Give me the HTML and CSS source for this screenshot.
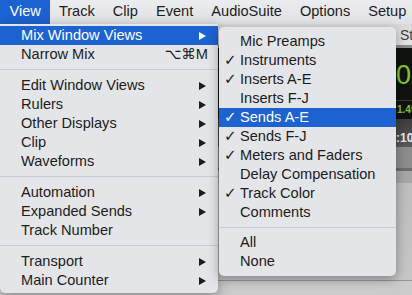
FILE: index.html
```html
<!DOCTYPE html>
<html lang="en">
<head>
  <meta charset="UTF-8">
  <title>View menu</title>
  <link rel="stylesheet" href="styles.css">
</head>
<body>

<div class="menubar">
  <span class="menubar-item active">View</span>
  <span class="menubar-item">Track</span>
  <span class="menubar-item">Clip</span>
  <span class="menubar-item">Event</span>
  <span class="menubar-item">AudioSuite</span>
  <span class="menubar-item">Options</span>
  <span class="menubar-item">Setup</span>
</div>

<div class="workspace">
  <!-- the window behind the menus -->
  <div class="win-toolbar"><span class="win-label">St</span></div>
  <div class="counter">
    <div class="counter-main">0.</div>
    <div class="counter-rule"></div>
    <div class="counter-sub">1.49</div>
  </div>
  <div class="counter-foot">:10</div>
  <div class="band band-a"></div>
  <div class="band band-b"></div>
  <div class="band band-c"></div>
  <div class="band band-d"></div>
  <div class="band band-e"></div>

  <div class="menu main-menu">
    <div class="item selected"><span class="label">Mix Window Views</span><span class="arrow"></span></div>
    <div class="item"><span class="label">Narrow Mix</span><span class="shortcut">⌥⌘M</span></div>
    <div class="sep"></div>
    <div class="item"><span class="label">Edit Window Views</span><span class="arrow"></span></div>
    <div class="item"><span class="label">Rulers</span><span class="arrow"></span></div>
    <div class="item"><span class="label">Other Displays</span><span class="arrow"></span></div>
    <div class="item"><span class="label">Clip</span><span class="arrow"></span></div>
    <div class="item"><span class="label">Waveforms</span><span class="arrow"></span></div>
    <div class="sep"></div>
    <div class="item"><span class="label">Automation</span><span class="arrow"></span></div>
    <div class="item"><span class="label">Expanded Sends</span><span class="arrow"></span></div>
    <div class="item"><span class="label">Track Number</span></div>
    <div class="sep"></div>
    <div class="item"><span class="label">Transport</span><span class="arrow"></span></div>
    <div class="item"><span class="label">Main Counter</span><span class="arrow"></span></div>
  </div>

  <div class="menu sub-menu">
    <div class="item"><span class="mark"></span><span class="label">Mic Preamps</span></div>
    <div class="item"><span class="mark">✓</span><span class="label">Instruments</span></div>
    <div class="item"><span class="mark">✓</span><span class="label">Inserts A-E</span></div>
    <div class="item"><span class="mark"></span><span class="label">Inserts F-J</span></div>
    <div class="item selected"><span class="mark">✓</span><span class="label">Sends A-E</span></div>
    <div class="item"><span class="mark">✓</span><span class="label">Sends F-J</span></div>
    <div class="item"><span class="mark">✓</span><span class="label">Meters and Faders</span></div>
    <div class="item"><span class="mark"></span><span class="label">Delay Compensation</span></div>
    <div class="item"><span class="mark">✓</span><span class="label">Track Color</span></div>
    <div class="item"><span class="mark"></span><span class="label">Comments</span></div>
    <div class="sep"></div>
    <div class="item"><span class="mark"></span><span class="label">All</span></div>
    <div class="item"><span class="mark"></span><span class="label">None</span></div>
  </div>
</div>

</body>
</html>
```

FILE: styles.css
```css
body {
  margin: 0;
  width: 412px;
  height: 295px;
  overflow: hidden;
  font-family: "Liberation Sans", "DejaVu Sans", sans-serif;
  font-size: 14.6px;
  color: #1c1c1c;
  background-color: #c4c4c4;
}

/* top menu bar */
.menubar {
  display: flex;
  height: 24px;
  line-height: 23px;
  background: linear-gradient(#ececef, #e0e1e5);
  white-space: nowrap;
}
.menubar-item {
  padding: 0 9px;
}
.menubar-item.active {
  padding-left: 9.5px;
  background-color: #1d62d1;
  color: #fff;
}

.workspace {
  position: relative;
  height: 271px;
}

/* window behind */
.win-toolbar {
  height: 21px;
  padding-left: 400px;
  background: linear-gradient(#d9d9d9, #e4e4e4);
  border-bottom: 3px solid #8c8c8c;
  line-height: 22px;
  color: #3a3a3a;
  font-size: 14px;
  white-space: nowrap;
}
.counter {
  height: 71px;
  padding-left: 394px;
  background-color: #0f120e;
  border-left: 2px solid #555;
  color: #86c52c;
  white-space: nowrap;
}
.counter-main {
  height: 52px;
  padding-top: 12px;
  box-sizing: border-box;
  font-size: 27px;
  line-height: 30px;
}
.counter-rule {
  height: 1px;
  background-color: #3a3a3a;
}
.counter-sub {
  padding-top: 3px;
  padding-left: 1px;
  font-size: 10px;
  font-weight: bold;
  line-height: 12px;
}
.counter-foot {
  height: 28px;
  padding-left: 396px;
  background: linear-gradient(#3c3c3c, #5a5a5a);
  color: #e8e8e8;
  font-size: 12px;
  font-weight: bold;
  line-height: 38px;
  white-space: nowrap;
}
.band-a {
  height: 21px;
  background-color: #8d8d8d;
}
.band-b {
  height: 3px;
  background-color: #6d6d6d;
}
.band-c {
  height: 12px;
  background-color: #a7a7a7;
}
.band-d {
  height: 97px;
  background: linear-gradient(#bdbdbd, #c6c6c6);
}
.band-e {
  height: 15px;
  border-top: 1px solid #979797;
  background-color: #cbcbcb;
}

/* drop-down menus */
.menu {
  position: absolute;
  background-color: #e3e5e9;
  box-shadow: 0 3px 12px rgba(0, 0, 0, 0.35);
  white-space: nowrap;
}
.main-menu {
  left: 0;
  top: 0;
  width: 218px;
  padding: 2px 0 3px;
  border-radius: 0 0 5px 5px;
}
.sub-menu {
  left: 219px;
  top: 3px;
  width: 177px;
  padding: 5px 0;
  border-radius: 5px;
}
.item {
  display: flex;
  align-items: center;
  height: 19px;
  line-height: 19px;
  padding: 0 12px 0 21px;
}
.sub-menu .item {
  padding-left: 0;
}
.item .label {
  flex: 1;
}
.item.selected {
  background-color: #1d62d1;
  color: #fff;
}
.mark {
  width: 21px;
  padding-left: 5px;
  box-sizing: border-box;
  font-family: "DejaVu Sans", sans-serif;
  font-size: 15px;
}
.shortcut {
  margin-right: -2px;
  font-family: "Liberation Sans", "DejaVu Sans", sans-serif;
}
.arrow {
  width: 0;
  height: 0;
  border-left: 7px solid #1c1c1c;
  border-top: 4.5px solid transparent;
  border-bottom: 4.5px solid transparent;
}
.item.selected .arrow {
  border-left-color: #fff;
}
.sep {
  height: 1px;
  margin: 5px 0 6px;
  background-color: #c8cbd0;
}
.sub-menu .sep {
  margin: 5px 0;
}
```
